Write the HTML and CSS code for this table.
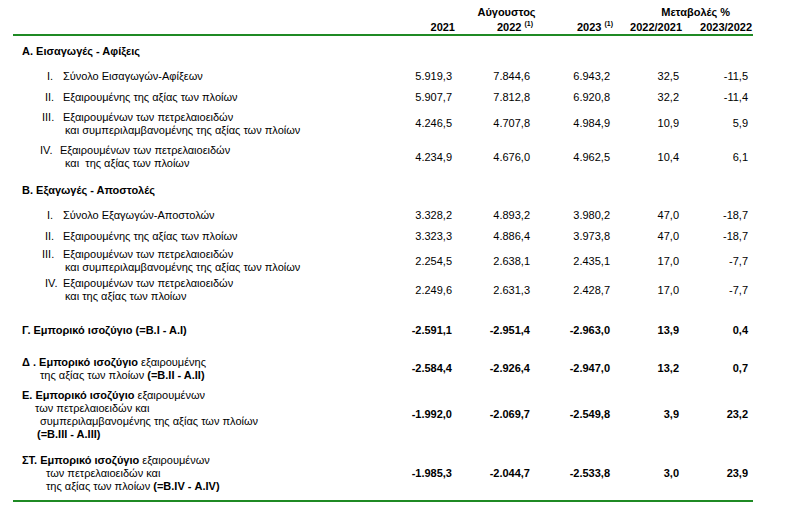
FILE: index.html
```html
<!DOCTYPE html>
<html lang="el">
<head>
    <meta charset="UTF-8">
    <meta name="viewport" content="width=device-width, initial-scale=1.0">
    <title>Εμπορικό ισοζύγιο - Αύγουστος</title>
    <link rel="stylesheet" href="styles.css">
</head>
<body>
    <table class="trade-table">
        <colgroup>
            <col class="c-label">
            <col class="c-y1">
            <col class="c-y2">
            <col class="c-y3">
            <col class="c-p1">
            <col class="c-p2">
        </colgroup>
        <thead>
            <tr class="head-top">
                <th></th>
                <th colspan="3" class="month">Αύγουστος</th>
                <th colspan="2" class="changes">Μεταβολές %</th>
            </tr>
            <tr class="head-years">
                <th></th>
                <th>2021</th>
                <th class="sup-cell">2022 <sup>(1)</sup></th>
                <th class="sup-cell">2023 <sup>(1)</sup></th>
                <th>2022/2021</th>
                <th class="last">2023/2022</th>
            </tr>
        </thead>
        <tbody>
            <tr class="section r-a">
                <td class="label">Α. Εισαγωγές - Αφίξεις</td>
                <td></td><td></td><td></td><td></td><td></td>
            </tr>
            <tr class="r-a1">
                <td class="label"><span class="num n1">I.</span><span class="txt">Σύνολο Εισαγωγών-Αφίξεων</span></td>
                <td>5.919,3</td><td>7.844,6</td><td>6.943,2</td><td>32,5</td><td>-11,5</td>
            </tr>
            <tr class="r-a2">
                <td class="label"><span class="num n2">II.</span><span class="txt">Εξαιρουμένης της αξίας των πλοίων</span></td>
                <td>5.907,7</td><td>7.812,8</td><td>6.920,8</td><td>32,2</td><td>-11,4</td>
            </tr>
            <tr class="r-a3">
                <td class="label"><span class="num n3">III.</span><span class="txt">Εξαιρουμένων των πετρελαιοειδών</span><br><span class="cont">και συμπεριλαμβανομένης της αξίας των πλοίων</span></td>
                <td>4.246,5</td><td>4.707,8</td><td>4.984,9</td><td>10,9</td><td>5,9</td>
            </tr>
            <tr class="r-a4">
                <td class="label"><span class="num n4">IV.</span><span class="txt t4">Εξαιρουμένων των πετρελαιοειδών</span><br><span class="cont">και&nbsp; της αξίας των πλοίων</span></td>
                <td>4.234,9</td><td>4.676,0</td><td>4.962,5</td><td>10,4</td><td>6,1</td>
            </tr>
            <tr class="section r-b">
                <td class="label">Β. Εξαγωγές - Αποστολές</td>
                <td></td><td></td><td></td><td></td><td></td>
            </tr>
            <tr class="r-b1">
                <td class="label"><span class="num n1">I.</span><span class="txt">Σύνολο Εξαγωγών-Αποστολών</span></td>
                <td>3.328,2</td><td>4.893,2</td><td>3.980,2</td><td>47,0</td><td>-18,7</td>
            </tr>
            <tr class="r-b2">
                <td class="label"><span class="num n2">II.</span><span class="txt">Εξαιρουμένης της αξίας των πλοίων</span></td>
                <td>3.323,3</td><td>4.886,4</td><td>3.973,8</td><td>47,0</td><td>-18,7</td>
            </tr>
            <tr class="r-b3">
                <td class="label"><span class="num n3">III.</span><span class="txt">Εξαιρουμένων των πετρελαιοειδών</span><br><span class="cont">και συμπεριλαμβανομένης της αξίας των πλοίων</span></td>
                <td>2.254,5</td><td>2.638,1</td><td>2.435,1</td><td>17,0</td><td>-7,7</td>
            </tr>
            <tr class="r-b4">
                <td class="label"><span class="num n4b">IV.</span><span class="txt">Εξαιρουμένων των πετρελαιοειδών</span><br><span class="cont">και της αξίας των πλοίων</span></td>
                <td>2.249,6</td><td>2.631,3</td><td>2.428,7</td><td>17,0</td><td>-7,7</td>
            </tr>
            <tr class="total r-g">
                <td class="label"><b>Γ. Εμπορικό ισοζύγιο (=Β.Ι - Α.Ι)</b></td>
                <td>-2.591,1</td><td>-2.951,4</td><td>-2.963,0</td><td>13,9</td><td>0,4</td>
            </tr>
            <tr class="total r-d">
                <td class="label"><b>Δ . Εμπορικό ισοζύγιο</b> εξαιρουμένης<br><span class="ind-18">της αξίας των πλοίων <b>(=Β.ΙΙ - Α.ΙΙ)</b></span></td>
                <td>-2.584,4</td><td>-2.926,4</td><td>-2.947,0</td><td>13,2</td><td>0,7</td>
            </tr>
            <tr class="total r-e">
                <td class="label"><b>Ε. Εμπορικό ισοζύγιο</b> εξαιρουμένων<br><span class="ind-13">των πετρελαιοειδών και</span><br><span class="ind-18">συμπεριλαμβανομένης της αξίας των πλοίων</span><br><span class="ind-15"><b>(=Β.ΙΙΙ - Α.ΙΙΙ)</b></span></td>
                <td>-1.992,0</td><td>-2.069,7</td><td>-2.549,8</td><td>3,9</td><td>23,2</td>
            </tr>
            <tr class="total r-st">
                <td class="label"><b>ΣΤ. Εμπορικό ισοζύγιο</b> εξαιρουμένων<br><span class="ind-24">των πετρελαιοειδών και</span><br><span class="ind-24">της αξίας των πλοίων <b>(=Β.ΙV - Α.ΙV)</b></span></td>
                <td>-1.985,3</td><td>-2.044,7</td><td>-2.533,8</td><td>3,0</td><td>23,9</td>
            </tr>
        </tbody>
    </table>
</body>
</html>
```
FILE: styles.css
```css
body {
    margin: 0;
    padding-top: 4px;
    background-color: #ffffff;
    color: #000000;
    font-family: "Liberation Sans", Arial, sans-serif;
    font-size: 11px;
}

.trade-table {
    margin-left: 13px;
    width: 740px;
    border-collapse: collapse;
    table-layout: fixed;
}

.c-label { width: 387px; }
.c-y1 { width: 55px; }
.c-y2 { width: 78px; }
.c-y3 { width: 80px; }
.c-p1 { width: 69px; }
.c-p2 { width: 71px; }

th, td {
    padding: 0;
    line-height: 13px;
    vertical-align: middle;
}

th {
    font-weight: bold;
    text-align: right;
    white-space: nowrap;
}

td {
    text-align: right;
    padding-right: 3px;
    white-space: nowrap;
}

td:last-child {
    padding-right: 5px;
}

.head-top {
    height: 16px;
}

.head-top th {
    padding-top: 1px;
}

.head-top .month {
    text-align: center;
}

.head-top .changes {
    padding-right: 23px;
}

.head-years {
    height: 15px;
}

.head-years th {
    border-bottom: 2px solid #1f8a24;
}

.head-years th.last {
    padding-right: 1px;
}

.sup-cell sup {
    font-size: 7px;
    line-height: 0;
    vertical-align: 5px;
}

.trade-table tbody tr:last-child td {
    border-bottom: 2px solid #1f8a24;
}

td.label {
    text-align: left;
    padding-left: 9px;
    padding-right: 0;
}

.section td.label {
    font-weight: bold;
}

.total td {
    font-weight: bold;
}

.total td.label {
    font-weight: normal;
}

.num {
    display: inline-block;
}

.n1 { margin-left: 25px; width: 16px; }
.n2 { margin-left: 23px; width: 18px; }
.n3 { margin-left: 20px; width: 21px; }
.n4 { margin-left: 18px; width: 20px; }
.n4b { margin-left: 23px; width: 18px; }

.cont {
    padding-left: 43px;
}

.ind-13 { padding-left: 13px; }
.ind-15 { padding-left: 15px; }
.ind-18 { padding-left: 18px; }
.ind-24 { padding-left: 24px; }

.r-a { height: 31px; }
.r-a1 { height: 20px; }
.r-a2 { height: 22px; }
.r-a3 { height: 31px; }
.r-a4 { height: 36px; }
.r-b { height: 30px; }
.r-b1 { height: 20px; }
.r-b2 { height: 22px; }
.r-b3 { height: 28px; }
.r-b4 { height: 30px; }
.r-g { height: 50px; }
.r-d { height: 27px; }
.r-e { height: 65px; }
.r-st { height: 54px; }
```
